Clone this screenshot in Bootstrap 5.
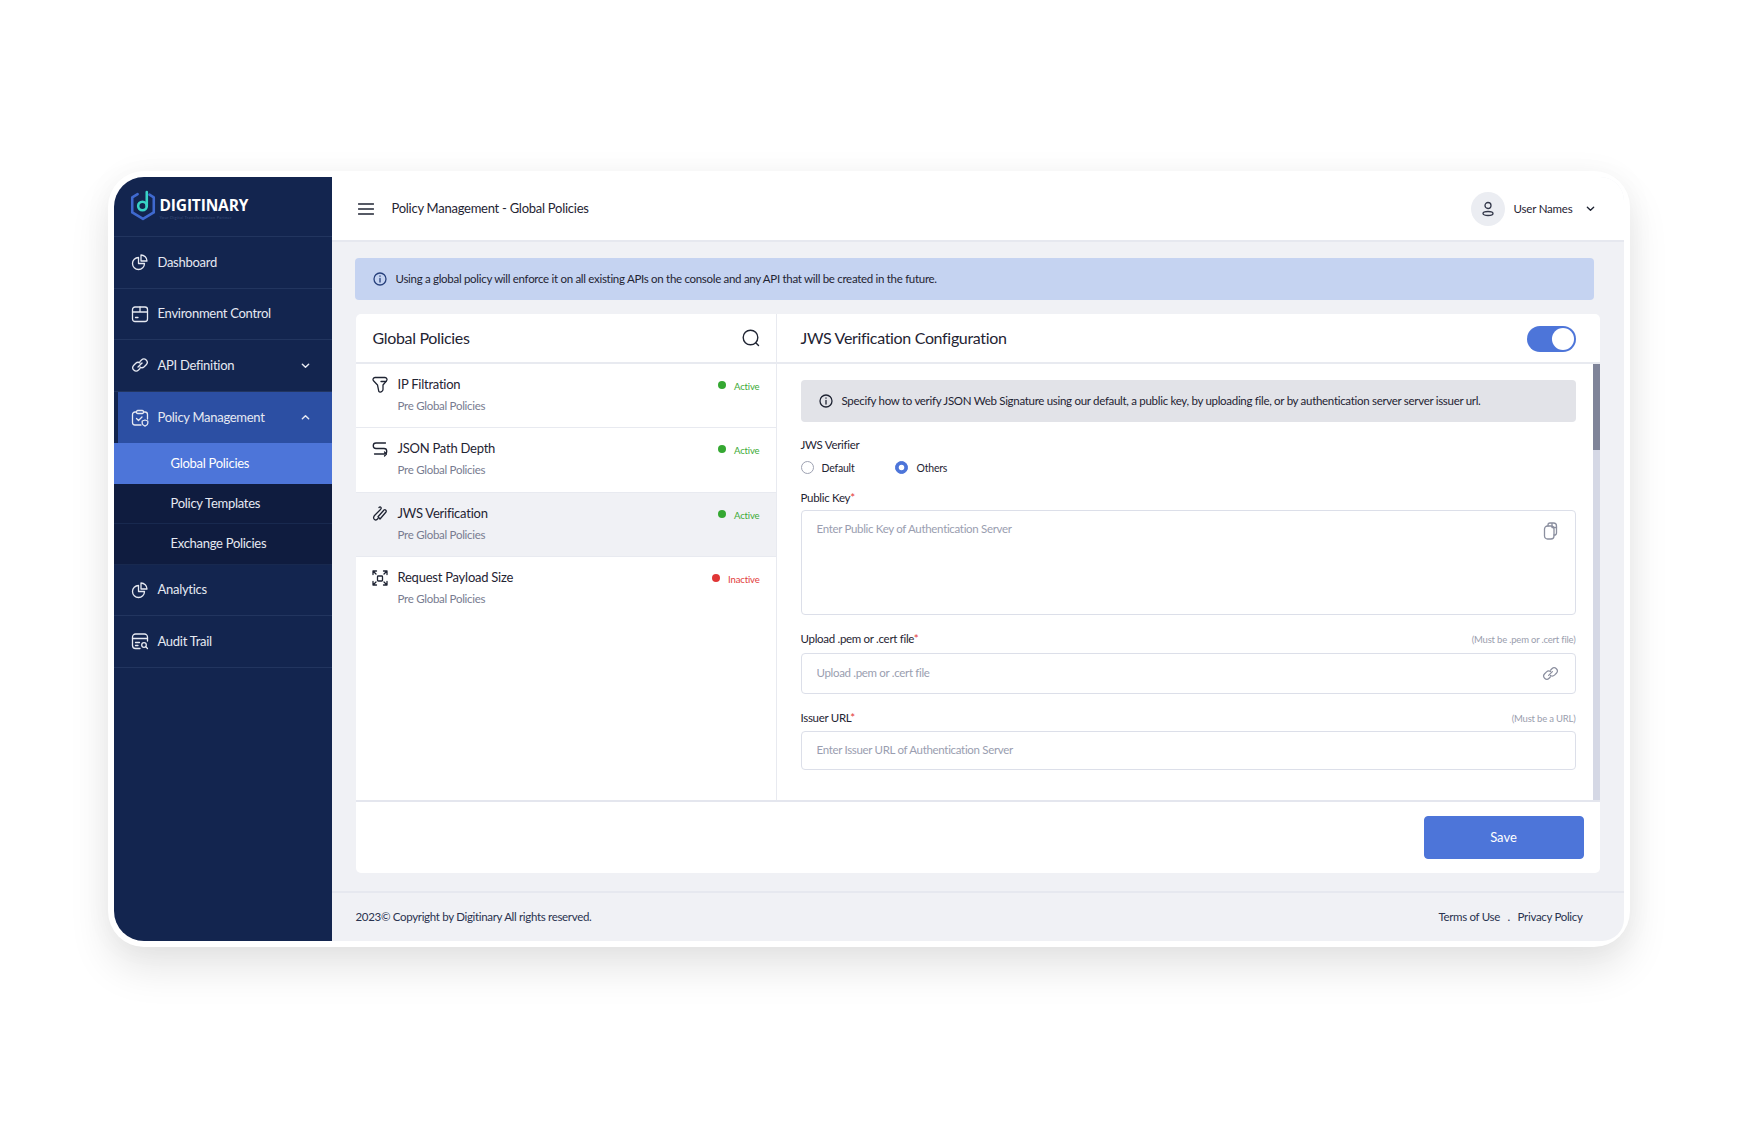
<!DOCTYPE html>
<html lang="en">
<head>
  <meta charset="UTF-8">
  <meta name="viewport" content="width=device-width, initial-scale=1.0">
  <title>Digitinary - Global Policies</title>
  <link rel="stylesheet" href="https://cdn.jsdelivr.net/npm/bootstrap@5.3.0/dist/css/bootstrap.min.css">
  <style>
    body { background: #fff; font-family: Lato, "Liberation Sans", sans-serif; color: #1f2433; min-height: 100vh; }
    svg { fill: none; stroke: currentColor; stroke-width: 1.3; stroke-linecap: round; stroke-linejoin: round; flex: none; }

    .app-frame { width: 1522px; height: 776px; padding: 6px; margin-bottom: 4px; background: #fff; border-radius: 36px; box-shadow: 0 22px 40px rgba(0,0,0,.1), 0 0 30px rgba(0,0,0,.04); }
    .app-inner { height: 100%; border-radius: 30px 24px 22px 30px; overflow: hidden; }

    /* sidebar */
    .side { width: 218px; background: #13254f; color: #e6e9f2; font-size: 13px; letter-spacing: -.28px; }
    .side-logo { height: 60px; padding: 12px 0 0 15px; gap: 3px; border-bottom: 1px solid #22355f; }
    .logo-word { color: #fff; font-weight: 700; font-size: 15.5px; line-height: 18px; margin-top: 7px; letter-spacing: -.15px; font-family: "Open Sans", sans-serif; }
    .logo-tag { color: #3a4c78; font-size: 4px; line-height: 5px; margin-top: 1px; letter-spacing: .3px; }
    .side-row { height: 51.6px; padding: 0 18px 0 17px; gap: 9px; color: #e6e9f2; text-decoration: none; border-bottom: 1px solid #22355f; }
    .side-row:hover { color: #fff; }
    .side-row .chev { margin-left: auto; width: 9px; height: 9px; stroke-width: 1.6; margin-right: 4px; }
    .side-row.is-open { background: #2c4fa3; margin-left: 4px; padding-left: 13px; border-bottom: 0; }
    .side-sub { height: 40.4px; padding-left: 57px; background: #0f1c3f; color: #e6e9f2; text-decoration: none; border-bottom: 1px solid #18294f; }
    .side-sub.is-current { background: #4d75d9; color: #fff; border-bottom: 0; }

    /* top bar */
    .main-col { background: #f0f1f5; min-width: 0; }
    .top-bar { height: 65px; background: #fff; border-bottom: 2px solid #e6e8ef; padding: 0 29px 0 26px; font-size: 13px; letter-spacing: -.26px; }
    .top-title { margin-left: 18px; }
    .avatar { width: 34px; height: 34px; background: #ebedf2; color: #33384a; }
    .user-name { font-size: 11.5px; margin-left: 9px; margin-right: 13px; letter-spacing: -.2px; }

    /* banners */
    .note-box { display: flex; align-items: center; margin: 0; border: 0; border-radius: 4px; font-size: 11.5px; letter-spacing: -.3px; height: 42px; padding: 0 0 0 18px; gap: 9px; color: #1f2433; }
    .note-blue { background: #c5d3f1; margin: 16px 30px 0 23px; }
    .note-grey { background: #e2e3e8; margin-bottom: 15px; }

    /* policy card */
    .policy-card { margin: 14px 24px 0 24px; height: 559px; border: 0; border-radius: 5px; overflow: hidden; }
    .card-top { height: 50px; border-bottom: 2px solid #e8eaf0; }
    .head-left { width: 421px; padding: 0 16px 0 17px; border-right: 1px solid #e8eaf0; height: 100%; }
    .head-right { padding: 0 24px; height: 100%; }
    .head-text { font-size: 16px; letter-spacing: -.33px; }
    .card-mid { height: 436px; }
    .list-pane { width: 421px; border-right: 1px solid #e8eaf0; }
    .policy-item { height: 64.3px; padding: 10px 16px 0 16px; border: 0; border-bottom: 2px solid #e8eaf0; border-radius: 0 !important; gap: 10px; color: #1f2433; }
    .policy-item > svg { margin-top: 2px; }
    .policy-item.list-group-item.active { background: #f0f1f5; color: #1f2433; margin-top: 0; border-bottom-color: #e8eaf0; }
    .item-title { font-size: 13px; line-height: 20px; letter-spacing: -.24px; }
    .item-sub { font-size: 11.5px; line-height: 14px; margin-top: 5px; color: #787c90; letter-spacing: -.28px; }
    .item-status { margin-left: auto; font-size: 9.5px; line-height: 14px; gap: 8px; margin-top: 6px; letter-spacing: -.15px; }
    .status-dot { width: 8px; height: 8px; margin-top: -4px; }
    .is-on { color: #3caa36; }
    .is-on .status-dot { background: #35a832; }
    .is-off { color: #e23a3a; }
    .is-off .status-dot { background: #e03636; }

    /* form */
    .form-pane { padding: 16px 17px 0 24px; }
    .field-label { font-size: 11.5px; line-height: 16px; margin-bottom: 5px; letter-spacing: -.3px; }
    .field-label b { color: #e23a3a; font-weight: 400; }
    .key-label { margin-bottom: 4px; }
    .file-label { margin-bottom: 6px; }
    .field-hint { font-size: 9.5px; color: #9a9eae; letter-spacing: -.2px; margin-top: -3px; }
    .form-pane .form-control { font-size: 11.5px; letter-spacing: -.32px; border: 1px solid #dcdfe9; border-radius: 4px; padding: 9px 15px 11px; box-shadow: none; }
    .form-pane .form-control::placeholder { color: #9a9eb0; }
    .key-area { height: 105px; resize: none; }
    .file-input { height: 41px; }
    .url-input { height: 39px; }
    .field-icon { position: absolute; right: 17px; color: #8b8f9f; }
    .radio-line { font-size: 10.5px; letter-spacing: -.2px; gap: 41px; margin-top: 7px; margin-bottom: 14px; height: 16px; }
    .radio-line .form-check { margin: 0; padding-left: 21px; min-height: 0; line-height: 14px; }
    .radio-line .form-check-input { width: 13px; height: 13px; margin: 0 0 0 -21px; border: 1px solid #9ea2b2; }
    .radio-line .form-check-input:checked { background-color: #4d75d9; border-color: #4d75d9; }
    .scroll-track { width: 7px; background: #d5d8e5; }
    .scroll-thumb { height: 86px; background: #7f8499; }

    .switch-big.form-check-input { width: 49px; height: 26px; margin: 2px 0 0; background-color: #4d75d9; border: 0; background-image: url("data:image/svg+xml,<svg xmlns='http://www.w3.org/2000/svg' viewBox='-4 -4 8 8'><circle r='3.4' fill='%23fff'/></svg>"); }
    .switch-wrap { padding: 0; margin: 0; min-height: 0; }

    .card-foot { height: 73px; border-top: 2px solid #e4e6ee; padding: 14px 16px 0 0; }
    .save-btn { width: 160px; height: 43px; background: #4d75d9; border-color: #4d75d9; border-radius: 4px; font-size: 13px; }

    .page-foot { margin-top: 18px; height: 50px; border-top: 2px solid #e6e8ef; padding: 0 41px 0 24px; font-size: 11.5px; letter-spacing: -.32px; color: #2a3350; }
    .page-foot a { color: #2a3350; text-decoration: none; }
    .foot-links { gap: 5px; }
  </style>
</head>
<body class="d-flex align-items-center justify-content-center">

  <div class="app-frame">
    <div class="app-inner d-flex">

      <!-- Sidebar -->
      <nav class="side d-flex flex-column flex-shrink-0">
        <div class="side-logo d-flex align-items-start">
          <svg width="28" height="34" viewBox="0 0 26 30" style="stroke-width:2.4">
            <path d="M8 4 3 7v14l10 6 10-6V7l-4-2.500" stroke="#3f69cf"/>
            <path d="M16.500 2v13" stroke="#38d3c6"/>
            <circle cx="12.500" cy="15" r="4" stroke="#38d3c6"/>
          </svg>
          <div>
            <div class="logo-word">DIGITINARY</div>
            <div class="logo-tag">Your Digital Transformation Partner</div>
          </div>
        </div>
        <a href="#" class="side-row d-flex align-items-center">
          <svg width="18" height="18" viewBox="0 0 18 18"><path d="M7.500 4.500a6 6 0 1 0 6 6h-6z"/><path d="M10 2a6 6 0 0 1 6 6h-6z"/></svg>
          Dashboard
        </a>
        <a href="#" class="side-row d-flex align-items-center">
          <svg width="18" height="18" viewBox="0 0 18 18"><rect x="1.500" y="2" width="15" height="14.500" rx="2.500"/><path d="M1.500 7h15M9 2v5M4.500 12.500H7"/></svg>
          Environment Control
        </a>
        <a href="#" class="side-row d-flex align-items-center">
          <svg width="18" height="18" viewBox="0 0 18 18"><path d="M7 11l4-4"/><path d="M9 5.500l1.500-1.500a3.300 3.300 0 0 1 4.700 4.700l-2 2a3.300 3.300 0 0 1-4.200.300"/><path d="M9 12.500 7.500 14a3.300 3.300 0 0 1-4.700-4.700l2-2a3.300 3.300 0 0 1 4.200-.300"/></svg>
          API Definition
          <svg class="chev" viewBox="0 0 10 10"><path d="M1.500 3.500 5 7l3.500-3.500"/></svg>
        </a>
        <a href="#" class="side-row is-open d-flex align-items-center">
          <svg width="18" height="18" viewBox="0 0 18 18"><path d="M5.500 3H4a2.500 2.500 0 0 0-2.500 2.500v8A2.500 2.500 0 0 0 4 16h6M12.500 3H14a2.500 2.500 0 0 1 2.500 2.500V10"/><rect x="5.500" y="1.500" width="7" height="3" rx="1.200"/><path d="M5.500 9.500 7.500 11.500 11 8"/><path d="M14 11l2.800 1v2.200c0 1.500-1.300 2.400-2.800 3-1.500-.600-2.800-1.500-2.800-3V12z"/></svg>
          Policy Management
          <svg class="chev" viewBox="0 0 10 10"><path d="M1.500 6.500 5 3l3.500 3.500"/></svg>
        </a>
        <a href="#" class="side-sub is-current d-flex align-items-center">Global Policies</a>
        <a href="#" class="side-sub d-flex align-items-center">Policy Templates</a>
        <a href="#" class="side-sub d-flex align-items-center">Exchange Policies</a>
        <a href="#" class="side-row d-flex align-items-center">
          <svg width="18" height="18" viewBox="0 0 18 18"><path d="M7.500 4.500a6 6 0 1 0 6 6h-6z"/><path d="M10 2a6 6 0 0 1 6 6h-6z"/></svg>
          Analytics
        </a>
        <a href="#" class="side-row d-flex align-items-center">
          <svg width="18" height="18" viewBox="0 0 18 18"><path d="M16.500 9V5a3 3 0 0 0-3-3h-9a3 3 0 0 0-3 3v8.500a3 3 0 0 0 3 3H9"/><path d="M1.500 6.500h15M4.500 10.500h4M4.500 13.500h2.500"/><circle cx="13" cy="13" r="2.300"/><path d="m14.800 14.800 1.700 1.700"/></svg>
          Audit Trail
        </a>
      </nav>

      <!-- Main -->
      <div class="main-col flex-grow-1 d-flex flex-column">
        <header class="top-bar d-flex align-items-center flex-shrink-0">
          <svg width="16" height="12" viewBox="0 0 16 12" style="stroke-width:1.500"><path d="M.500 1h15M.500 6h15M.500 11h15"/></svg>
          <span class="top-title">Policy Management - Global Policies</span>
          <div class="avatar rounded-circle d-flex align-items-center justify-content-center ms-auto">
            <svg width="14" height="16" viewBox="0 0 14 16"><circle cx="7" cy="4.500" r="3"/><ellipse cx="7" cy="12.500" rx="5" ry="2"/></svg>
          </div>
          <span class="user-name">User Names</span>
          <svg width="9" height="9" viewBox="0 0 10 10" style="stroke-width:1.500"><path d="M1.500 3.500 5 7l3.500-3.500"/></svg>
        </header>

        <div class="alert note-box note-blue flex-shrink-0">
          <svg width="14" height="14" viewBox="0 0 14 14" style="color:#27407c"><circle cx="7" cy="7" r="6"/><path d="M7 6.500v3.500M7 4v.200"/></svg>
          Using a global policy will enforce it on all existing APIs on the console and any API that will be created in the future.
        </div>

        <div class="card policy-card flex-shrink-0">
          <div class="card-top d-flex align-items-center">
            <div class="head-left d-flex align-items-center justify-content-between">
              <span class="head-text">Global Policies</span>
              <svg width="18" height="18" viewBox="0 0 18 18" style="stroke-width:1.400"><circle cx="8.500" cy="8.500" r="7.300"/><path d="m14 14 2.500 2.500"/></svg>
            </div>
            <div class="head-right flex-grow-1 d-flex align-items-center justify-content-between">
              <span class="head-text">JWS Verification Configuration</span>
              <div class="form-check form-switch switch-wrap">
                <input class="form-check-input switch-big" type="checkbox" role="switch" checked aria-label="Enable">
              </div>
            </div>
          </div>

          <div class="card-mid d-flex">
            <div class="list-pane flex-shrink-0">
              <div class="list-group list-group-flush">
                <a href="#" class="list-group-item policy-item d-flex align-items-start">
                  <svg width="16" height="18" viewBox="0 0 16 18"><path d="M3 1.500h10a2 2 0 0 1 1.500 3.300L11 9v4.500c0 1-.500 1.500-1.200 2-.800.600-2.300 1-3-.200L5.500 9 1.500 4.800A2 2 0 0 1 3 1.500z"/><path d="M9 5.500h5"/></svg>
                  <div>
                    <div class="item-title">IP Filtration</div>
                    <div class="item-sub">Pre Global Policies</div>
                  </div>
                  <div class="item-status is-on d-flex align-items-center"><span class="status-dot rounded-circle"></span>Active</div>
                </a>
                <a href="#" class="list-group-item policy-item d-flex align-items-start">
                  <svg width="16" height="18" viewBox="0 0 16 18"><path d="M13.500 3H4a2.700 2.700 0 0 0 0 5.500h8a2.700 2.700 0 0 1 0 5.500H2.500"/><path d="m12.500 12 2 2-2 2"/></svg>
                  <div>
                    <div class="item-title">JSON Path Depth</div>
                    <div class="item-sub">Pre Global Policies</div>
                  </div>
                  <div class="item-status is-on d-flex align-items-center"><span class="status-dot rounded-circle"></span>Active</div>
                </a>
                <a href="#" class="list-group-item policy-item active d-flex align-items-start">
                  <svg width="16" height="18" viewBox="0 0 16 18"><path d="M7 2.500c1.500-1.500 3 .500 1.500 2L3 10c-1.500 1.500-2 3.500-.5 4.500 1.300 1 2.700 0 3.500-1"/><path d="m8 14 6-7c1-1.200-.8-3-2-2l-6 6.800z"/></svg>
                  <div>
                    <div class="item-title">JWS Verification</div>
                    <div class="item-sub">Pre Global Policies</div>
                  </div>
                  <div class="item-status is-on d-flex align-items-center"><span class="status-dot rounded-circle"></span>Active</div>
                </a>
                <a href="#" class="list-group-item policy-item d-flex align-items-start">
                  <svg width="16" height="18" viewBox="0 0 16 18"><rect x="5.500" y="7" width="5" height="5" rx=".8"/><path d="M1 2h3.500M1 2v3.500M1 2l3 3M15 2h-3.500M15 2v3.500M15 2l-3 3M1 16h3.500M1 16v-3.500M1 16l3-3M15 16h-3.500M15 16v-3.500M15 16l-3-3"/></svg>
                  <div>
                    <div class="item-title">Request Payload Size</div>
                    <div class="item-sub">Pre Global Policies</div>
                  </div>
                  <div class="item-status is-off d-flex align-items-center"><span class="status-dot rounded-circle"></span>Inactive</div>
                </a>
              </div>
            </div>

            <div class="form-pane flex-grow-1">
              <div class="alert note-box note-grey">
                <svg width="14" height="14" viewBox="0 0 14 14"><circle cx="7" cy="7" r="6"/><path d="M7 6.500v3.500M7 4v.200"/></svg>
                Specify how to verify JSON Web Signature using our default, a public key, by uploading file, or by authentication server server issuer url.
              </div>

              <div class="field-label">JWS Verifier</div>
              <div class="radio-line d-flex align-items-center">
                <div class="form-check">
                  <input class="form-check-input" type="radio" name="verifier" id="verDefault">
                  <label class="form-check-label" for="verDefault">Default</label>
                </div>
                <div class="form-check">
                  <input class="form-check-input" type="radio" name="verifier" id="verOthers" checked>
                  <label class="form-check-label" for="verOthers">Others</label>
                </div>
              </div>

              <label class="field-label key-label d-block" for="pubKey">Public Key<b>*</b></label>
              <div class="position-relative mb-3">
                <textarea id="pubKey" class="form-control key-area" placeholder="Enter Public Key of Authentication Server"></textarea>
                <svg class="field-icon" style="top:12px" width="16" height="18" viewBox="0 0 16 18"><rect x="1.500" y="4" width="9.500" height="13" rx="3"/><path d="M5 4V3a2 2 0 0 1 2-2h3.500a3 3 0 0 1 3 3v7a2 2 0 0 1-2.500 2"/><path d="M9 1.500v4h4.500"/></svg>
              </div>

              <div class="d-flex justify-content-between align-items-center">
                <label class="field-label file-label" for="certFile">Upload .pem or .cert file<b>*</b></label>
                <span class="field-hint">(Must be .pem or .cert file)</span>
              </div>
              <div class="position-relative mb-3">
                <input id="certFile" type="text" class="form-control file-input" placeholder="Upload .pem or .cert file">
                <svg class="field-icon" style="top:12px" width="17" height="17" viewBox="0 0 18 18"><path d="M7 11l4-4"/><path d="M9 5.500l1.500-1.500a3.300 3.300 0 0 1 4.700 4.700l-2 2a3.300 3.300 0 0 1-4.200.300"/><path d="M9 12.500 7.500 14a3.300 3.300 0 0 1-4.700-4.700l2-2a3.300 3.300 0 0 1 4.200-.300"/></svg>
              </div>

              <div class="d-flex justify-content-between align-items-center">
                <label class="field-label" for="issuerUrl">Issuer URL<b>*</b></label>
                <span class="field-hint">(Must be a URL)</span>
              </div>
              <input id="issuerUrl" type="text" class="form-control url-input" placeholder="Enter Issuer URL of Authentication Server">
            </div>

            <div class="scroll-track flex-shrink-0"><div class="scroll-thumb"></div></div>
          </div>

          <div class="card-foot d-flex justify-content-end">
            <button type="button" class="btn btn-primary save-btn">Save</button>
          </div>
        </div>

        <footer class="page-foot d-flex align-items-center justify-content-between">
          <span>2023&copy; Copyright by Digitinary All rights reserved.</span>
          <span class="foot-links d-flex"><a href="#">Terms of Use</a><span>&nbsp;.&nbsp;</span><a href="#">Privacy Policy</a></span>
        </footer>
      </div>

    </div>
  </div>

  <script src="https://cdn.jsdelivr.net/npm/bootstrap@5.3.0/dist/js/bootstrap.bundle.min.js"></script>
</body>
</html>
